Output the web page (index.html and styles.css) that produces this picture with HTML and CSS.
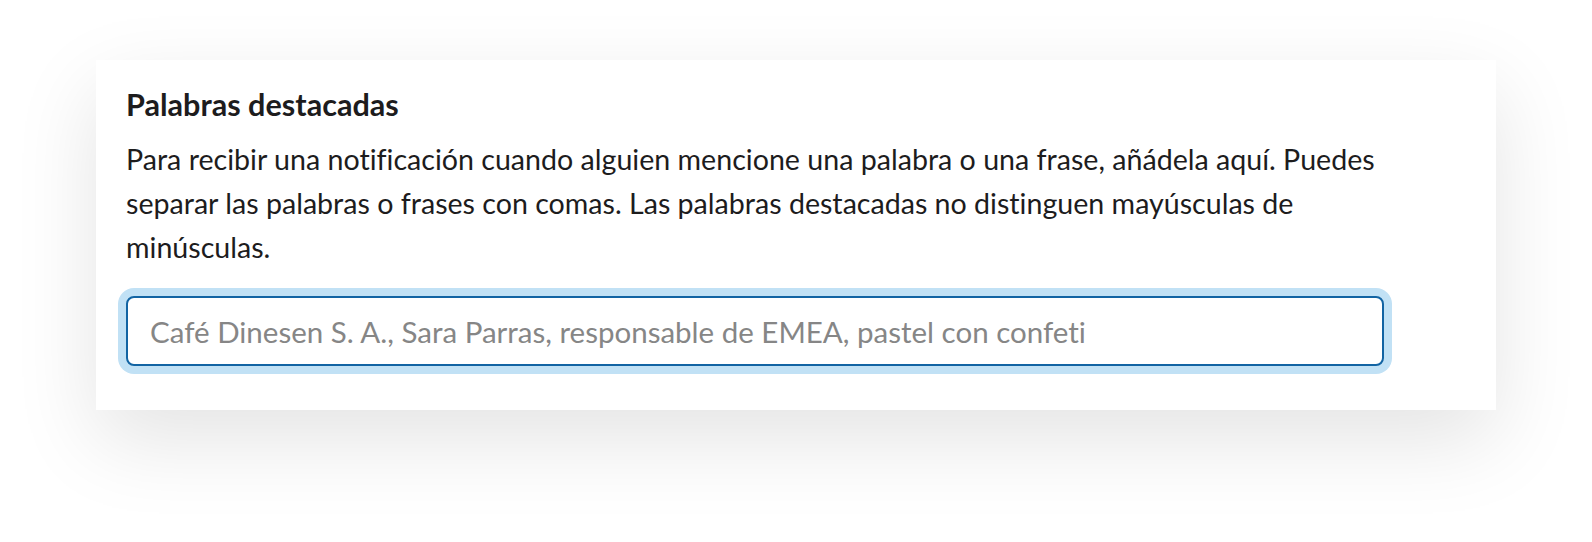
FILE: index.html
```html
<!doctype html>
<html>
<head>
    <meta charset="utf-8">
    <title>Palabras destacadas</title>
    <link rel="stylesheet" href="styles.css">
</head>
<body>
    <div class="panel">
        <h2 class="panel-title">Palabras destacadas</h2>
        <p class="panel-text">Para recibir una notificación cuando alguien mencione una palabra o una frase, añádela aquí. Puedes separar las palabras o frases con comas. Las palabras destacadas no distinguen mayúsculas de minúsculas.</p>
        <input class="keywords" type="text" placeholder="Café Dinesen S. A., Sara Parras, responsable de EMEA, pastel con confeti">
    </div>
</body>
</html>
```

FILE: styles.css
```css
html, body {
    margin: 0;
    background: #fff;
    font-family: Lato, 'Noto Sans', sans-serif;
    font-variant-ligatures: none;
    color: #1d1c1d;
}

body {
    min-height: 100vh;
    padding-top: 60px;
    box-sizing: border-box;
}

.panel {
    box-sizing: border-box;
    width: 1400px;
    height: 350px;
    margin-left: 96px;
    padding: 27px 112px 0 30px;
    background: #fff;
    box-shadow: 0 30px 80px rgba(0, 0, 0, 0.11);
}

.panel-title {
    margin: 0;
    font-size: 30.6px;
    line-height: 36px;
    font-weight: 700;
}

.panel-text {
    margin: 14px 0 27px;
    font-size: 28.6px;
    line-height: 44px;
}

.keywords {
    display: block;
    box-sizing: border-box;
    width: 1258px;
    height: 70px;
    padding: 0 22px;
    border: 2px solid #1264a3;
    border-radius: 8px;
    box-shadow: 0 0 0 8px #c1e1f5;
    outline: none;
    font-family: inherit;
    font-variant-ligatures: none;
    font-size: 29.5px;
    color: #1d1c1d;
}

.keywords::placeholder {
    color: #868686;
}
```
